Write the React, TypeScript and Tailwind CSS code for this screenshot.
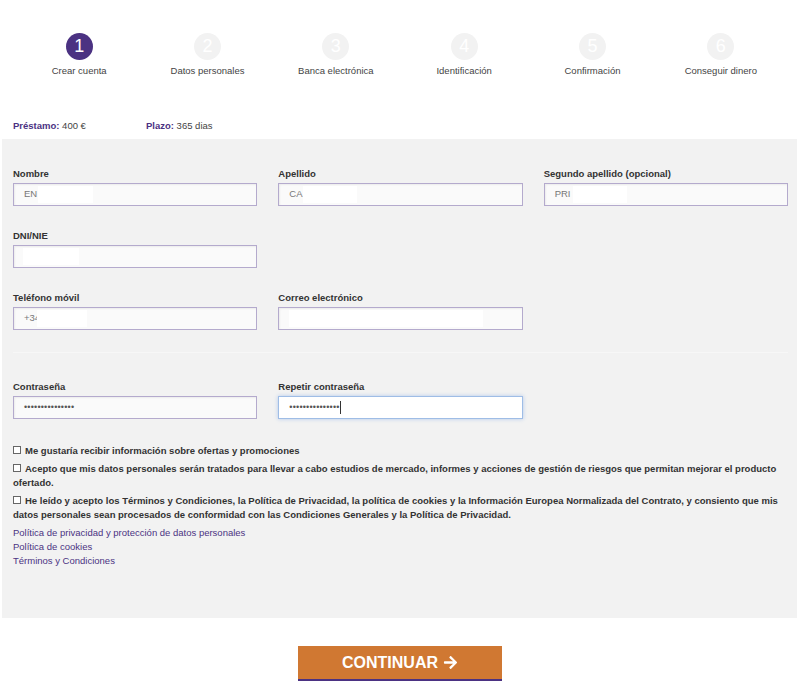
import { FaArrowRight } from 'react-icons/fa';

const steps = [
  'Crear cuenta',
  'Datos personales',
  'Banca electrónica',
  'Identificación',
  'Confirmación',
  'Conseguir dinero',
];

function Field({
  label,
  text,
  mask,
  focus,
}: {
  label: string;
  text?: string;
  mask?: [number, number];
  focus?: boolean;
}) {
  return (
    <div className="flex flex-col">
      <label className="text-[9.5px] leading-[13px] font-bold text-[#333] mb-[3px]">{label}</label>
      <div
        className={
          focus
            ? 'relative h-[23px] flex items-center pl-[10px] bg-white border border-[#9fbde6] shadow-[0_0_4px_rgba(102,153,230,0.45)]'
            : 'relative h-[23px] flex items-center pl-[10px] bg-[#fafafa] border border-[#b4aacd] shadow-[inset_1px_1px_2px_rgba(0,0,0,0.06)]'
        }
      >
        {text && <span className="text-[9.5px] text-[#777]">{text}</span>}
        {mask && (
          <span
            className="absolute top-[2px] bottom-[2px] bg-white"
            style={{ left: mask[0], width: mask[1] }}
          />
        )}
      </div>
    </div>
  );
}

function Password({ label, focus }: { label: string; focus?: boolean }) {
  return (
    <div className="flex flex-col">
      <label className="text-[9.5px] leading-[13px] font-bold text-[#333] mb-[3px]">{label}</label>
      <div
        className={
          focus
            ? 'h-[23px] flex items-center pl-[10px] bg-white border border-[#9fbde6] shadow-[0_0_4px_rgba(102,153,230,0.45)]'
            : 'h-[23px] flex items-center pl-[10px] bg-[#fafafa] border border-[#b4aacd] shadow-[inset_1px_1px_2px_rgba(0,0,0,0.06)]'
        }
      >
        <span className="text-[9px] text-[#555] tracking-[0.2px]">•••••••••••••••</span>
        {focus && <span className="w-px h-[13px] bg-[#333]" />}
      </div>
    </div>
  );
}

function Check({ children }: { children: React.ReactNode }) {
  return (
    <p className="text-[9.5px] leading-[14px] font-bold text-[#333]">
      <span className="inline-block w-[8px] h-[8px] border border-[#666] bg-white mr-[4px] align-[0px]" />
      {children}
    </p>
  );
}

export default function App() {
  return (
    <div
      className="w-[800px] h-[692px] bg-white overflow-hidden"
      style={{ fontFamily: '"Liberation Sans", Arial, sans-serif' }}
    >
      {/* Stepper */}
      <div className="grid grid-cols-6 px-[15px] pt-[33px]">
        {steps.map((s, i) => (
          <div key={s} className="flex flex-col items-center">
            <div
              className={
                i === 0
                  ? 'w-[27px] h-[27px] rounded-full bg-[#4b3282] text-white flex items-center justify-center text-[18px]'
                  : 'w-[27px] h-[27px] rounded-full bg-[#f2f2f2] text-white flex items-center justify-center text-[18px]'
              }
            >
              {i + 1}
            </div>
            <div className="mt-[4px] text-[9.5px] leading-[13px] text-[#444]">{s}</div>
          </div>
        ))}
      </div>

      {/* Loan summary */}
      <div className="flex pl-[13px] mt-[43px] text-[9.5px] leading-[12px] text-[#444]">
        <div className="w-[133px]">
          <span className="font-bold text-[#4b3282]">Préstamo:</span> 400 €
        </div>
        <div>
          <span className="font-bold text-[#4b3282]">Plazo:</span> 365 dias
        </div>
      </div>

      {/* Form panel */}
      <div className="ml-[2px] mr-[3px] mt-[7px] h-[479px] bg-[#f2f2f2] pl-[11px] pr-[9px] pt-[28px]">
        <div className="grid grid-cols-3 gap-x-[21px]">
          <Field label="Nombre" text="EN" mask={[24, 55]} />
          <Field label="Apellido" text="CA" mask={[24, 54]} />
          <Field label="Segundo apellido (opcional)" text="PRI" mask={[28, 54]} />
        </div>
        <div className="grid grid-cols-3 gap-x-[21px] mt-[23px]">
          <Field label="DNI/NIE" mask={[9, 56]} />
        </div>
        <div className="grid grid-cols-3 gap-x-[21px] mt-[23px]">
          <Field label="Teléfono móvil" text="+34" mask={[23, 50]} />
          <Field label="Correo electrónico" mask={[10, 194]} />
        </div>

        <div className="mt-[22px] border-t border-[#f7f7f7]" />

        <div className="grid grid-cols-3 gap-x-[21px] mt-[27px]">
          <Password label="Contraseña" />
          <Password label="Repetir contraseña" focus />
        </div>

        <div className="mt-[25px] flex flex-col gap-[4px] pr-[6px]">
          <Check>Me gustaría recibir información sobre ofertas y promociones</Check>
          <Check>
            Acepto que mis datos personales serán tratados para llevar a cabo estudios de mercado, informes y
            acciones de gestión de riesgos que permitan mejorar el producto ofertado.
          </Check>
          <Check>
            He leído y acepto los Términos y Condiciones, la Política de Privacidad, la política de cookies y la
            Información Europea Normalizada del Contrato, y consiento que mis datos personales sean procesados de
            conformidad con las Condiciones Generales y la Política de Privacidad.
          </Check>
        </div>

        <div className="mt-[4px] flex flex-col text-[9.5px] leading-[14px] text-[#4b3282]">
          <a>Política de privacidad y protección de datos personales</a>
          <a>Política de cookies</a>
          <a>Términos y Condiciones</a>
        </div>
      </div>

      {/* Continue */}
      <div className="flex justify-center mt-[28px]">
        <button className="w-[204px] h-[35px] bg-[#d07832] border-b-2 border-[#4b3282] text-white font-bold text-[16px] flex items-center justify-center gap-[5px]">
          CONTINUAR
          <FaArrowRight className="w-[15px] h-[15px]" />
        </button>
      </div>
    </div>
  );
}
